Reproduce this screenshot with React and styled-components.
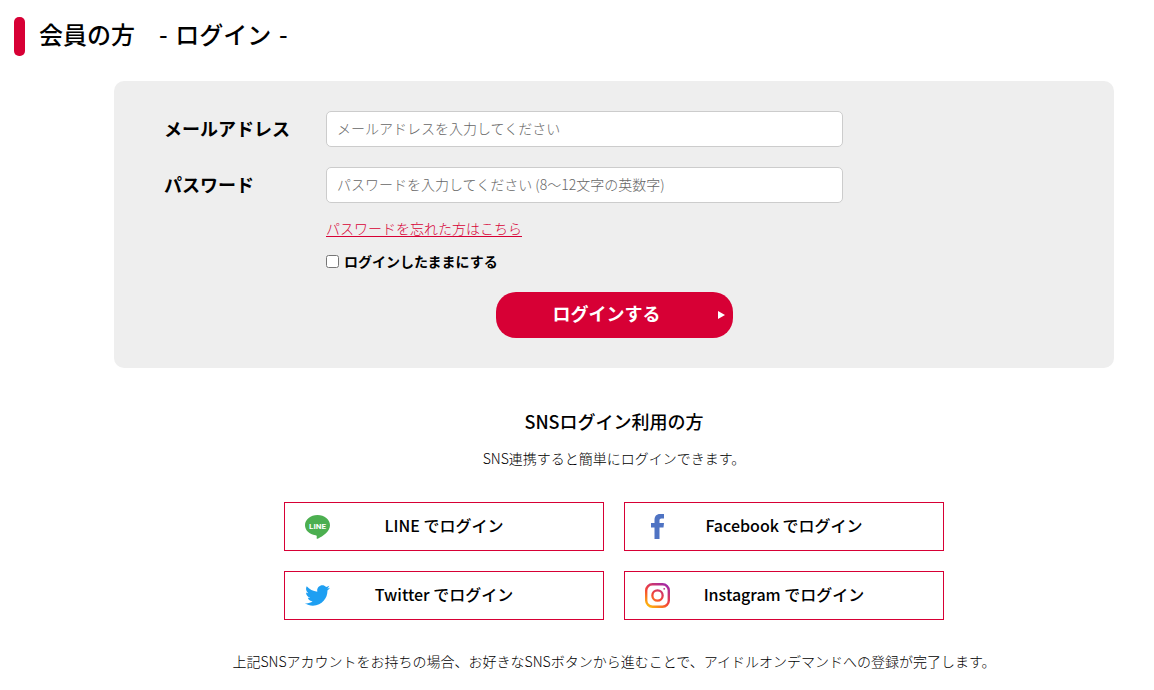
import React from "react";
import styled, { createGlobalStyle } from "styled-components";
import { FaTwitter } from "react-icons/fa";

const RED = "#d70035";

const GlobalStyle = createGlobalStyle`
  *, *::before, *::after { box-sizing: border-box; }
  body {
    margin: 0;
    background: #fff;
    color: #000;
    font-family: "Noto Sans CJK JP", sans-serif;
    font-size: 14px;
    font-weight: 300;
    line-height: 20px;
  }
`;

const Page = styled.main`
  padding: 17px 0 16px 14px;
`;

const PageTitle = styled.h1`
  display: flex;
  align-items: center;
  gap: 14px;
  margin: 0 0 25px;
  font-family: "DejaVu Sans", "Noto Sans CJK JP", sans-serif;
  font-size: 24px;
  font-weight: 500;
  line-height: 39px;

  &::before {
    content: "";
    width: 11px;
    height: 39px;
    border-radius: 5px;
    background: ${RED};
  }
`;

const Content = styled.div`
  padding-left: 60px;
`;

const LoginForm = styled.form`
  display: flex;
  flex-direction: column;
  max-width: 1000px;
  margin: 0 auto;
  padding: 30px 50px;
  border-radius: 10px;
  background: #eee;
`;

const Field = styled.div`
  display: grid;
  grid-template-columns: 162px minmax(0, 517px);
  align-items: center;
  margin-bottom: 20px;
`;

const FieldLabel = styled.label`
  padding-bottom: 2px;
  font-size: 18px;
  font-weight: 700;
`;

const TextInput = styled.input`
  width: 100%;
  height: 36px;
  padding: 0 10px 2px;
  border: 1px solid #ccc;
  border-radius: 5px;
  background: #fff;
  font: inherit;

  &::placeholder {
    color: #666;
  }
`;

const Options = styled.div`
  display: flex;
  flex-direction: column;
  align-items: flex-start;
  gap: 13px;
  margin: -5px 0 21px 162px;
`;

const ForgotLink = styled.a`
  color: ${RED};
  text-decoration: underline;
  text-underline-offset: 2px;
`;

const KeepLabel = styled.label`
  display: flex;
  align-items: center;
  gap: 5px;
  font-weight: 700;
`;

const Checkbox = styled.input`
  width: 13px;
  height: 13px;
  margin: 0;
`;

const SubmitButton = styled.button`
  position: relative;
  align-self: center;
  width: 237px;
  height: 46px;
  padding: 0 15px 4px 0;
  border: 0;
  border-radius: 20px;
  background: ${RED};
  color: #fff;
  font: inherit;
  font-size: 18px;
  font-weight: 700;
  cursor: pointer;

  &::after {
    content: "";
    position: absolute;
    top: 19px;
    right: 8px;
    border: solid transparent;
    border-width: 4px 0 4px 7px;
    border-left-color: #fff;
  }
`;

const SnsSection = styled.section`
  padding-top: 43px;
  text-align: center;
`;

const SnsTitle = styled.h2`
  margin: 0 0 17px;
  font-size: 18px;
  font-weight: 500;
  line-height: 20px;
`;

const Note = styled.p`
  margin: 0;
`;

const SnsGrid = styled.div`
  display: grid;
  grid-template-columns: repeat(2, minmax(0, 320px));
  justify-content: center;
  gap: 20px;
  margin: 34px 0 31px;
`;

const SnsButton = styled.button`
  display: grid;
  grid-template-columns: 26px 1fr 26px;
  align-items: center;
  height: 49px;
  padding: 0 20px;
  border: 1px solid ${RED};
  background: #fff;
  color: #000;
  font: inherit;
  font-size: 16px;
  font-weight: 500;
  cursor: pointer;

  svg {
    display: block;
  }
`;

const SnsLabel = styled.span`
  padding-bottom: 3px;
`;

const LineIcon = () => (
  <svg width="26" height="26" viewBox="0 0 26 26" aria-hidden="true">
    <path
      fill="#4caf50"
      d="M12.500 1C5.600 1 0 5.500 0 11.200c0 5 4.400 9.200 10.500 10 1.500.3 1.400 1 1.200 2.200-.2 1.400.2 1.800 1.500 1.100C17.500 22.300 25 17.500 25 11.200 25 5.500 19.400 1 12.500 1z"
    />
    <text
      x="12.500"
      y="14.500"
      fill="#fff"
      fontFamily="Roboto, sans-serif"
      fontSize="8"
      fontWeight="700"
      textAnchor="middle"
    >
      LINE
    </text>
  </svg>
);

const FacebookIcon = () => (
  <svg width="26" height="26" viewBox="0 0 26 26" aria-hidden="true">
    <path
      fill="#4f73c3"
      d="M9.500 25V13.500H6V9h3.500V6C9.500 2.300 11.500 0 15 0h4v4.500h-2.600C15 4.500 14.500 5.200 14.500 6.500V9H19l-.5 4.500h-4V25z"
    />
  </svg>
);

const InstagramIcon = () => (
  <svg width="26" height="26" viewBox="0 0 26 26" aria-hidden="true">
    <defs>
      <linearGradient id="instagram" x1="0.15" y1="1" x2="0.85" y2="0">
        <stop offset="0" stopColor="#ffc107" />
        <stop offset="0.45" stopColor="#f44336" />
        <stop offset="1" stopColor="#9c27b0" />
      </linearGradient>
    </defs>
    <path
      fill="url(#instagram)"
      fillRule="evenodd"
      d="M7.500 0h10A7.500 7.500 0 0 1 25 7.500v10a7.500 7.500 0 0 1-7.500 7.500h-10A7.500 7.500 0 0 1 0 17.500v-10A7.500 7.500 0 0 1 7.500 0zM7.500 2.400A5.100 5.100 0 0 0 2.400 7.500v10A5.100 5.100 0 0 0 7.500 22.600h10A5.100 5.100 0 0 0 22.600 17.500v-10A5.100 5.100 0 0 0 17.500 2.400zM12.500 6.200a6.300 6.300 0 1 1 0 12.600a6.300 6.300 0 1 1 0-12.600zM12.500 8.500a4 4 0 1 0 0 8a4 4 0 1 0 0-8zM19.200 4.900a.9.9 0 1 1 0 1.800a.9.9 0 1 1 0-1.800z"
    />
  </svg>
);

const services = [
  { name: "LINE", icon: <LineIcon /> },
  { name: "Facebook", icon: <FacebookIcon /> },
  { name: "Twitter", icon: <FaTwitter size={25} color="#1e9ff2" aria-hidden="true" /> },
  { name: "Instagram", icon: <InstagramIcon /> },
];

export default function App() {
  return (
    <>
      <GlobalStyle />
      <Page lang="ja">
        <PageTitle>会員の方　- ログイン -</PageTitle>
        <Content>
          <LoginForm onSubmit={(event) => event.preventDefault()}>
            <Field>
              <FieldLabel htmlFor="email">メールアドレス</FieldLabel>
              <TextInput
                id="email"
                type="email"
                placeholder="メールアドレスを入力してください"
              />
            </Field>
            <Field>
              <FieldLabel htmlFor="password">パスワード</FieldLabel>
              <TextInput
                id="password"
                type="password"
                placeholder="パスワードを入力してください (8〜12文字の英数字)"
              />
            </Field>
            <Options>
              <ForgotLink href="#forgot">パスワードを忘れた方はこちら</ForgotLink>
              <KeepLabel htmlFor="keep">
                <Checkbox id="keep" type="checkbox" />
                ログインしたままにする
              </KeepLabel>
            </Options>
            <SubmitButton type="submit">ログインする</SubmitButton>
          </LoginForm>
          <SnsSection>
            <SnsTitle>SNSログイン利用の方</SnsTitle>
            <Note>SNS連携すると簡単にログインできます。</Note>
            <SnsGrid>
              {services.map(({ name, icon }) => (
                <SnsButton key={name} type="button">
                  {icon}
                  <SnsLabel>{name} でログイン</SnsLabel>
                </SnsButton>
              ))}
            </SnsGrid>
            <Note>
              上記SNSアカウントをお持ちの場合、お好きなSNSボタンから進むことで、アイドルオンデマンドへの登録が完了します。
            </Note>
          </SnsSection>
        </Content>
      </Page>
    </>
  );
}
